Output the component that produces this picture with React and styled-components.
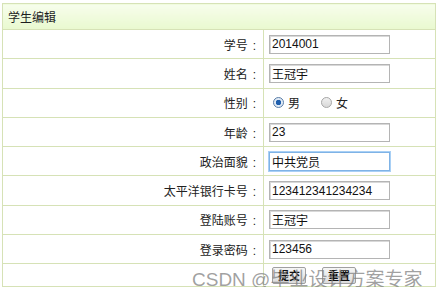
import React, { useState } from 'react';
import styled, { createGlobalStyle } from 'styled-components';

const GlobalStyle = createGlobalStyle`
  body {
    margin: 0;
    background: #fff;
    font-family: "Liberation Sans", "Noto Sans CJK SC", sans-serif;
    font-size: 12px;
    color: #222;
  }
`;

const Page = styled.div`
  position: relative;
  padding: 3px 1px 0 2px;
  width: 437px;
  box-sizing: border-box;
`;

const Table = styled.table`
  width: 434px;
  border-collapse: collapse;
  border: 1px solid #d6e2b6;
`;

const HeadCell = styled.th`
  height: 25px;
  padding: 0 0 0 5px;
  text-align: left;
  font-weight: normal;
  font-size: 12px;
  color: #1e1e1e;
  background: linear-gradient(#f7fdec, #e9f9cf);
  border-bottom: 1px solid #d6e2b6;
`;

const Row = styled.tr`
  height: ${(p) => p.$h || 29.3}px;
`;

const Label = styled.td`
  width: 253px;
  padding: 0 7px 0 0;
  text-align: right;
  border: 1px solid #d6e2b6;
  border-left: none;
  font-size: 12px;
  color: #222;
  white-space: nowrap;
`;

const Colon = styled.span`
  margin-left: 5px;
`;

const Value = styled.td`
  padding: 0 0 0 5px;
  border: 1px solid #d6e2b6;
  border-right: none;
`;

const Input = styled.input`
  box-sizing: border-box;
  width: 121px;
  height: 19px;
  margin: 0;
  padding: 1px 2px;
  font-family: "Liberation Sans", "Noto Sans CJK SC", sans-serif;
  font-size: 12px;
  color: #111;
  border: 1px solid ${(p) => (p.$focus ? '#7fb3e6' : '#b4b4b4')};
  box-shadow: ${(p) => (p.$focus ? '0 0 0 1px #a9d0f5' : 'inset 1px 1px 0 #d8d8d8')};
  outline: none;
`;

const RadioGroup = styled.div`
  display: flex;
  align-items: center;
  gap: 4px;
  padding-left: 4px;
`;

const RadioLabel = styled.label`
  display: flex;
  align-items: center;
  gap: 4px;
  margin-right: 17px;
  font-size: 12px;
`;

const Dot = styled.span`
  width: 11px;
  height: 11px;
  border-radius: 50%;
  box-sizing: border-box;
  border: 1px solid ${(p) => (p.$on ? '#5b7ea8' : '#a8a8a8')};
  background: ${(p) =>
    p.$on
      ? 'radial-gradient(circle, #1f5fae 0 2.5px, #dfe9f5 3px)'
      : 'linear-gradient(#f0f0f0, #d8d8d8)'};
`;

const Buttons = styled.div`
  display: flex;
  gap: 16px;
  padding-left: 3px;
`;

const Button = styled.button`
  height: 17px;
  padding: 0 5px;
  font-family: "Noto Sans CJK SC", sans-serif;
  font-size: 11px;
  font-weight: bold;
  color: #111;
  background: linear-gradient(#f6f6f6, #dcdcdc);
  border: 1px solid #a0a0a0;
  border-radius: 2px;
  line-height: 15px;
`;

const Watermark = styled.div`
  position: absolute;
  left: 192px;
  top: 264px;
  font-family: "Liberation Sans", "Noto Sans CJK SC", sans-serif;
  font-size: 19px;
  color: rgba(130, 130, 130, 0.75);
  pointer-events: none;
  white-space: nowrap;
`;

const fields = [
  ['学号', '2014001'],
  ['姓名', '王冠宇'],
  ['性别', null],
  ['年龄', '23'],
  ['政治面貌', '中共党员', true],
  ['太平洋银行卡号', '123412341234234'],
  ['登陆账号', '王冠宇'],
  ['登录密码', '123456'],
];

export default function App() {
  const [sex, setSex] = useState('男');
  return (
    <Page>
      <GlobalStyle />
      <Table>
        <thead>
          <tr>
            <HeadCell colSpan={2}>学生编辑</HeadCell>
          </tr>
        </thead>
        <tbody>
          {fields.map(([name, val, focus]) => (
            <Row key={name}>
              <Label>
                {name}
                <Colon>:</Colon>
              </Label>
              <Value>
                {val === null ? (
                  <RadioGroup>
                    {['男', '女'].map((s) => (
                      <RadioLabel key={s} onClick={() => setSex(s)}>
                        <Dot $on={sex === s} />
                        {s}
                      </RadioLabel>
                    ))}
                  </RadioGroup>
                ) : (
                  <Input defaultValue={val} $focus={focus} />
                )}
              </Value>
            </Row>
          ))}
          <Row $h={23}>
            <Label />
            <Value>
              <Buttons>
                <Button>提交</Button>
                <Button>重置</Button>
              </Buttons>
            </Value>
          </Row>
        </tbody>
      </Table>
      <Watermark>CSDN @毕业设计方案专家</Watermark>
    </Page>
  );
}
